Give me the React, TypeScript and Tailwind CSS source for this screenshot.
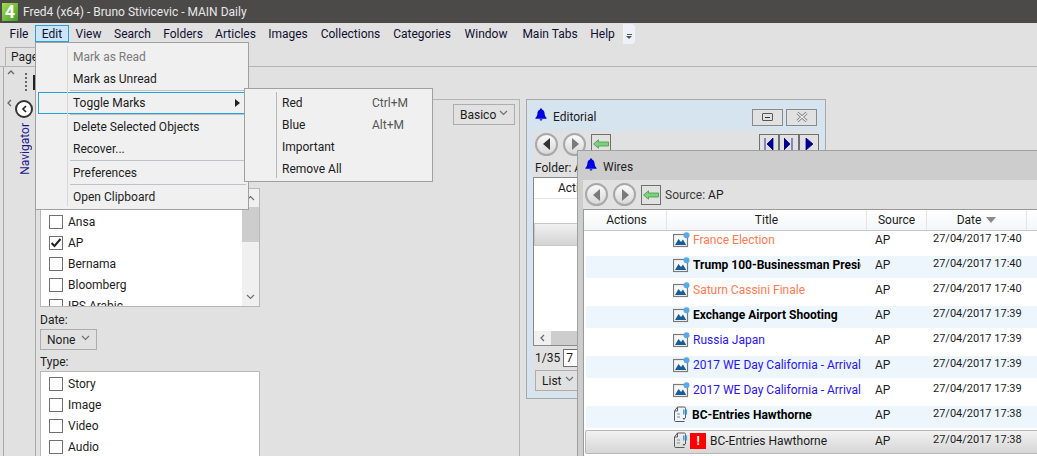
import React from "react";

const font = { fontFamily: 'Roboto, "Noto Sans", sans-serif' };

function Bell({ className = "" }: { className?: string }) {
  return (
    <svg width="12" height="13" viewBox="0 0 12 13" className={className}>
      <path d="M6 0.5c.8 0 1.2.6 1.2 1.2C9 2.3 9.5 3.8 9.6 5.6c.1 2 .8 3.2 2 4.4v.8H.4V10c1.2-1.2 1.9-2.4 2-4.4C2.5 3.8 3 2.3 4.8 1.700 4.800 1.100 5.200.500 6 .500z" fill="#0000e0" />
      <path d="M4.600 11.200h2.800c0 .8-.6 1.300-1.400 1.300s-1.400-.5-1.400-1.300z" fill="#0000e0" />
    </svg>
  );
}

function Circle({ dir, dim }: { dir: "l" | "r"; dim?: boolean }) {
  const fill = dim ? "#7a7a7a" : "#333333";
  return (
    <div className="flex h-[23px] w-[23px] items-center justify-center rounded-full border-2 border-[#a8a8a8] bg-gradient-to-b from-[#fafafa] to-[#d8d8d8]">
      <svg width="8" height="12" viewBox="0 0 8 12">
        <path d={dir === "l" ? "M7 0v12L0 6z" : "M1 0v12l7-6z"} fill={fill} />
      </svg>
    </div>
  );
}

function GreenArrow() {
  return (
    <div className="flex h-[20px] w-[20px] items-center justify-center border border-[#707070]">
      <svg width="16" height="10" viewBox="0 0 16 10">
        <path d="M0.500 5L5.500 0.800V3H15.500V7H5.500V9.200z" fill="#7fd07f" stroke="#3f9a4a" strokeWidth="0.800" />
      </svg>
    </div>
  );
}

function ImageIcon() {
  return (
    <svg width="17" height="16" viewBox="0 0 17 16" className="shrink-0">
      <rect x="0.500" y="2.500" width="14" height="12" fill="#f4f7fa" stroke="#7a7a7a" strokeWidth="1.200" />
      <path d="M2 13l3.500-6 2.500 3 2-2.500 3.200 5.500z" fill="#1a5c94" />
      <circle cx="13.500" cy="3.300" r="3" fill="#5aa9e6" />
    </svg>
  );
}

function DocIcon() {
  return (
    <svg width="16" height="17" viewBox="0 0 16 17" className="shrink-0">
      <path d="M4.500 1h7c1 0 1 1 1 1.500V12M11.500 15.500H2.500c-1 0-1-1-1-1.500V5L4.500 1V5H1.500" fill="none" stroke="#5a5a5a" strokeWidth="1" />
      <rect x="10" y="3.500" width="1.600" height="5" fill="#4da3e0" />
      <rect x="12.500" y="3.500" width="1.600" height="5" fill="#4da3e0" />
      <path d="M4 8h3M4 11h3" stroke="#8a8a8a" />
      <path d="M9.500 12l1.500 2 1.500-2z" fill="#555" />
    </svg>
  );
}

function Check({ on }: { on?: boolean }) {
  return (
    <div className="flex h-[14px] w-[14px] shrink-0 items-center justify-center border border-[#707070] bg-white">
      {on && (
        <svg width="12" height="10" viewBox="0 0 12 10">
          <path d="M1.500 5l3 3 6-7" fill="none" stroke="#222" strokeWidth="2" />
        </svg>
      )}
    </div>
  );
}

function CheckRow({ label, on }: { label: string; on?: boolean }) {
  return (
    <div className="flex h-[21px] shrink-0 items-center gap-[5px] pl-[8px]">
      <Check on={on} />
      <span>{label}</span>
    </div>
  );
}

function Chev({ className = "" }: { className?: string }) {
  return (
    <svg width="9" height="6" viewBox="0 0 9 6" className={className}>
      <path d="M1 1l3.500 3.500L8 1" fill="none" stroke="#707070" strokeWidth="1.200" />
    </svg>
  );
}

function Select({ label, w }: { label: string; w: string }) {
  return (
    <div className={`flex h-[21px] items-center justify-between border border-[#adadad] bg-[#e1e1e1] pl-[6px] pr-[6px] ${w}`}>
      <span>{label}</span>
      <Chev className="mb-[3px]" />
    </div>
  );
}

const menus: [string, string][] = [
  ["File", "w-[32px]"], ["Edit", "w-[34px]"], ["View", "w-[39px]"], ["Search", "w-[49px]"],
  ["Folders", "w-[52px]"], ["Articles", "w-[53px]"], ["Images", "w-[52px]"], ["Collections", "w-[73px]"],
  ["Categories", "w-[70px]"], ["Window", "w-[58px]"], ["Main Tabs", "w-[70px]"], ["Help", "w-[35px]"],
];

const rows: { t: string; c: string; doc?: boolean; d: string; alt?: boolean }[] = [
  { t: "France Election", c: "text-[#ff7a50]", d: "27/04/2017 17:40" },
  { t: "Trump 100-Businessman President", c: "font-bold text-black", d: "27/04/2017 17:40", alt: true },
  { t: "Saturn Cassini Finale", c: "text-[#ff7a50]", d: "27/04/2017 17:40" },
  { t: "Exchange Airport Shooting", c: "font-bold text-black", d: "27/04/2017 17:39", alt: true },
  { t: "Russia Japan", c: "text-[#2a14f0]", d: "27/04/2017 17:39" },
  { t: "2017 WE Day California - Arrivals", c: "text-[#2a14f0]", d: "27/04/2017 17:39", alt: true },
  { t: "2017 WE Day California - Arrivals", c: "text-[#2a14f0]", d: "27/04/2017 17:39" },
  { t: "BC-Entries Hawthorne", c: "font-bold text-black", d: "27/04/2017 17:38", doc: true, alt: true },
];

function HeaderCell({ w, children }: { w: string; children: React.ReactNode }) {
  return (
    <div className={`flex h-full shrink-0 items-center justify-center gap-[5px] border-r border-[#e4e4e4] ${w}`}>
      {children}
    </div>
  );
}

function MenuItem({ label, gray, hover, arrow }: { label: string; gray?: boolean; hover?: boolean; arrow?: boolean }) {
  return (
    <div className={`mx-[2px] flex h-[22px] items-center border pl-[34px] ${hover ? "border-[#26a0da]" : "border-transparent"} ${gray ? "text-[#7a7a7a]" : ""}`}>
      <span>{label}</span>
      {arrow && (
        <svg width="5" height="8" viewBox="0 0 5 8" className="ml-auto mr-[5px]">
          <path d="M0 0l5 4-5 4z" fill="#222" />
        </svg>
      )}
    </div>
  );
}

function MenuSep() {
  return <div className="ml-[34px] mr-[2px] h-[2px] border-t border-[#bcc3cc]" />;
}

function SubItem({ label, sc }: { label: string; sc?: string }) {
  return (
    <div className="flex h-[22px] items-center pl-[37px]">
      <span className="w-[90px]">{label}</span>
      {sc && <span className="text-[#555]">{sc}</span>}
    </div>
  );
}

export default function App() {
  return (
    <div className="relative flex h-[456px] w-[1037px] flex-col overflow-hidden bg-[#e1e1e1] text-[12px] text-[#1c1c1c]" style={font}>
      {/* Title bar */}
      <div className="flex h-[23px] shrink-0 items-center bg-[#4b4a48] pl-[2px]">
        <div className="flex h-[18px] w-[16px] items-center justify-center bg-gradient-to-br from-[#a4e04a] to-[#3f9e2c] text-[18px] font-bold leading-none text-white">4</div>
        <span className="ml-[5px] text-[12px] text-[#e8e8e8]">Fred4 (x64) - Bruno Stivicevic - MAIN Daily</span>
      </div>
      {/* Menu bar */}
      <div className="flex h-[21px] shrink-0 items-center pl-[3px] text-[12px] text-[#101030]">
        {menus.map(([m, w]) => (
          <div key={m} className={`flex h-[17px] items-center justify-center ${w} ${m === "Edit" ? "border border-[#26a0da] bg-[#cce4f7]" : ""}`}>{m}</div>
        ))}
        <div className="ml-[3px] flex h-[20px] w-[12px] flex-col items-center justify-end rounded-r bg-[#eef2f8] pb-[4px]">
          <div className="h-px w-[5px] bg-[#555]" />
          <svg width="6" height="4" viewBox="0 0 6 4" className="mt-[1px]"><path d="M0 0h6L3 3z" fill="#555" /></svg>
        </div>
      </div>
      {/* Tabs */}
      <div className="flex h-[23px] shrink-0 items-end border-b border-[#b4b4b4] pl-[5px]">
        <div className="flex h-[19px] w-[40px] items-center border border-b-0 border-[#b4b4b4] pl-[5px]">Page</div>
      </div>
      {/* Body */}
      <div className="relative flex min-h-0 flex-1 pl-[3px]">
        <div className="flex w-[33px] shrink-0 flex-col border-x border-[#a8a8a8]">
          <div className="flex h-[31px] items-start">
            <svg width="8" height="5" viewBox="0 0 8 5" className="ml-[3px] mt-[3px]"><path d="M1 4l3-3 3 3" fill="none" stroke="#666" strokeWidth="1.300" /></svg>
            <div className="ml-[10px] mt-[6px] h-[18px] border-l-2 border-dotted border-[#666]" />
            <div className="ml-[6px] mt-[8px] h-[15px] w-[2px] bg-[#222]" />
          </div>
          <div className="flex items-start pl-[3px]">
            <svg width="5" height="8" viewBox="0 0 5 8" className="mt-[1px]"><path d="M4 1L1 4l3 3" fill="none" stroke="#666" strokeWidth="1.300" /></svg>
            <div className="ml-[3px] mt-[2px] flex h-[18px] w-[18px] items-center justify-center rounded-full border-2 border-[#333] bg-white">
              <svg width="6" height="8" viewBox="0 0 6 8"><path d="M5 1L2 4l3 3" fill="none" stroke="#222" strokeWidth="1.600" /></svg>
            </div>
          </div>
          <div className="mt-[5px] flex justify-center pl-[11px]">
            <span className="rotate-180 text-[12px] text-[#1a1a90] [writing-mode:vertical-rl]">Navigator</span>
          </div>
        </div>
        <div className="mt-[32px] flex h-[500px] w-[484px] shrink-0 border-r border-t border-[#b4b4b4]">
          <div className="w-[224px] shrink-0 pl-[4px] pt-[88px]">
            <div className="flex h-[119px] w-[220px] border border-[#b8b8b8] bg-white">
              <div className="flex min-w-0 flex-1 flex-col overflow-hidden">
                <div className="h-[22px] shrink-0" />
                <CheckRow label="Ansa" />
                <CheckRow label="AP" on />
                <CheckRow label="Bernama" />
                <CheckRow label="Bloomberg" />
                <div className="h-[11px] shrink-0 overflow-hidden"><CheckRow label="IPS Arabic" /></div>
              </div>
              <div className="flex w-[17px] shrink-0 flex-col items-center bg-[#f0f0f0]">
                <div className="flex h-[18px] w-full items-center justify-center">
                  <Chev className="rotate-180" />
                </div>
                <div className="h-[35px] w-full bg-[#cdcdcd]" />
                <div className="flex-1" />
                <Chev className="mb-[6px]" />
              </div>
            </div>
            <div className="mt-[5px] leading-[16px]">Date:</div>
            <div className="mt-[1px]"><Select label="None" w="w-[57px]" /></div>
            <div className="mt-[4px] leading-[16px]">Type:</div>
            <div className="mt-[1px] h-[120px] w-[220px] border border-[#b8b8b8] bg-white pt-[1px]">
              <CheckRow label="Story" />
              <CheckRow label="Image" />
              <CheckRow label="Video" />
              <CheckRow label="Audio" />
            </div>
          </div>
          <div className="flex flex-1 justify-end pr-[4px] pt-[4px]">
            <Select label="Basico" w="w-[62px]" />
          </div>
        </div>

        {/* Editorial window */}
        <div className="absolute left-[526px] top-[32px] flex h-[300px] w-[300px] flex-col border border-[#a8a8a8] bg-[#d6e4f0] px-[6px]">
          <div className="flex h-[31px] shrink-0 items-center pl-[2px] pt-[3px]">
            <Bell className="mb-[5px]" />
            <span className="ml-[6px]">Editorial</span>
            <div className="ml-auto flex gap-[3px] pr-[2px]">
              <div className="flex h-[17px] w-[31px] items-center justify-center border border-[#8a8a8a] bg-[#e1e1e1]">
                <div className="flex h-[8px] w-[11px] items-center justify-center rounded-[1px] border border-[#555]"><div className="h-px w-[5px] bg-[#333]" /></div>
              </div>
              <div className="flex h-[17px] w-[31px] items-center justify-center border border-[#8a8a8a] bg-[#e1e1e1]">
                <svg width="12" height="10" viewBox="0 0 12 10">
                  <path d="M1.500 1l9 8M10.500 1l-9 8" stroke="#7a7a7a" strokeWidth="3" />
                  <path d="M1.500 1l9 8M10.500 1l-9 8" stroke="#f4f4f4" strokeWidth="1.200" />
                </svg>
              </div>
            </div>
          </div>
          <div className="flex h-[46px] shrink-0 flex-col bg-[#e1e1e1]">
            <div className="flex h-[26px] items-center gap-[5px] pl-[2px]">
              <Circle dir="l" />
              <Circle dir="r" dim />
              <GreenArrow />
              <div className="ml-auto flex">
                {["M1 0v12M9 0v12L3 6z", "M0 0v12l6-6zM8 0v12", "M2 0v12l7-6z"].map((d) => (
                  <div key={d} className="flex h-[20px] w-[20px] items-center justify-center border border-[#707070]">
                    <svg width="10" height="12" viewBox="0 0 10 12"><path d={d} fill="#000090" stroke="#000090" strokeWidth="0.800" /></svg>
                  </div>
                ))}
              </div>
            </div>
            <div className="pl-[2px] pt-[3px] leading-[16px]">Folder: AP</div>
          </div>
          <div className="flex min-h-0 flex-1 flex-col border border-[#8a8a8a] bg-white">
            <div className="flex h-[21px] shrink-0 items-center border-b border-[#e4e4e4] pl-[24px]">Actions</div>
            <div className="mt-[24px] h-[23px] shrink-0 border border-[#c8c8c8] bg-gradient-to-b from-[#f0f0f0] to-[#d4d4d4]" />
            <div className="mt-auto flex h-[14px] shrink-0 items-center bg-[#cdcdcd]">
              <div className="flex h-full w-[17px] items-center justify-center bg-[#f0f0f0]">
                <svg width="5" height="8" viewBox="0 0 5 8"><path d="M4 1L1 4l3 3" fill="none" stroke="#666" strokeWidth="1.200" /></svg>
              </div>
            </div>
          </div>
          <div className="flex h-[24px] shrink-0 items-center gap-[3px] bg-[#e1e1e1] pl-[2px]">
            <span>1/35</span>
            <div className="flex h-[18px] w-[24px] items-center border border-[#707070] bg-white pl-[2px]">7</div>
          </div>
          <div className="h-[23px] shrink-0 bg-[#e1e1e1] pl-[2px]"><Select label="List" w="w-[46px]" /></div>
          <div className="h-[5px] shrink-0 bg-[#d6e4f0]" />
        </div>

        {/* Wires window */}
        <div className="absolute left-[577px] top-[83px] flex h-[320px] w-[480px] flex-col border-l border-t border-[#a0a0a0] bg-[#cdcdcd] pl-[5px]">
          <div className="flex h-[29px] shrink-0 items-center pl-[2px] pt-[3px]">
            <Bell className="mb-[5px]" />
            <span className="ml-[6px]">Wires</span>
          </div>
          <div className="flex h-[29px] shrink-0 items-center gap-[5px] bg-[#e1e1e1] pl-[2px]">
            <Circle dir="l" dim />
            <Circle dir="r" dim />
            <GreenArrow />
            <span className="ml-[-1px] text-[#3a3a3a]">Source: <span className="text-[#1c1c1c]">AP</span></span>
          </div>
          <div className="flex min-h-0 flex-1 flex-col border-l border-t border-[#9a9a9a] bg-white">
            <div className="flex h-[21px] shrink-0 border-b border-[#c8c8c8] bg-gradient-to-b from-white to-[#f4f6f9] pl-[3px]">
              <HeaderCell w="w-[80px]">Actions</HeaderCell>
              <HeaderCell w="w-[200px]">Title</HeaderCell>
              <HeaderCell w="w-[60px]">Source</HeaderCell>
              <HeaderCell w="w-[100px]">
                Date
                <svg width="10" height="6" viewBox="0 0 10 6"><path d="M0 0h10L5 6z" fill="#8a8a8a" /></svg>
              </HeaderCell>
            </div>
            {rows.map((r, i) => (
              <div key={i} className={`mb-[3px] ml-[2px] flex h-[22px] shrink-0 items-center pb-[5px] ${r.alt ? "rounded-[2px] bg-[#eef6fd]" : ""}`}>
                <div className="w-[80px] shrink-0" />
                <div className="flex w-[195px] shrink-0 items-center overflow-hidden pl-[7px]">
                  {r.doc ? <DocIcon /> : <ImageIcon />}
                  <span className={`ml-[3px] whitespace-nowrap ${r.c}`}>{r.t}</span>
                </div>
                <div className="w-[72px] shrink-0 pl-[14px]">AP</div>
                <div className="shrink-0 whitespace-nowrap text-[11px]">{r.d}</div>
              </div>
            ))}
            <div className="ml-[1px] mt-[-1px] flex h-[24px] shrink-0 items-center rounded-[2px] border border-[#b8b8b8] bg-gradient-to-b from-[#f2f2f2] to-[#d6d6d6] pb-[3px]">
              <div className="w-[80px] shrink-0" />
              <div className="flex w-[195px] shrink-0 items-center pl-[7px]">
                <DocIcon />
                <div className="ml-[1px] flex h-[16px] w-[16px] items-center justify-center bg-[#ff0000] text-[12px] font-bold leading-none text-white">!</div>
                <span className="ml-[4px] whitespace-nowrap">BC-Entries Hawthorne</span>
              </div>
              <div className="w-[72px] shrink-0 pl-[14px]">AP</div>
              <div className="shrink-0 whitespace-nowrap text-[11px]">27/04/2017 17:38</div>
            </div>
          </div>
        </div>
      </div>

      {/* Edit menu */}
      <div className="absolute left-[35px] top-[42px] h-[168px] w-[214px] border border-[#a0a0a0] bg-[#f0f0f0] pt-[3px]">
        <div className="absolute bottom-[3px] left-[31px] top-[3px] w-px bg-[#d8d8d8]" />
        <MenuItem label="Mark as Read" gray />
        <MenuItem label="Mark as Unread" />
        <MenuSep />
        <MenuItem label="Toggle Marks" hover arrow />
        <MenuSep />
        <MenuItem label="Delete Selected Objects" />
        <MenuItem label="Recover..." />
        <MenuSep />
        <MenuItem label="Preferences" />
        <MenuSep />
        <MenuItem label="Open Clipboard" />
      </div>
      {/* Submenu */}
      <div className="absolute left-[244px] top-[88px] h-[94px] w-[189px] border border-[#a0a0a0] bg-[#f0f0f0] pt-[3px]">
        <div className="absolute bottom-[3px] left-[31px] top-[3px] w-px bg-[#b8b8b8]" />
        <SubItem label="Red" sc="Ctrl+M" />
        <SubItem label="Blue" sc="Alt+M" />
        <SubItem label="Important" />
        <SubItem label="Remove All" />
      </div>
    </div>
  );
}
